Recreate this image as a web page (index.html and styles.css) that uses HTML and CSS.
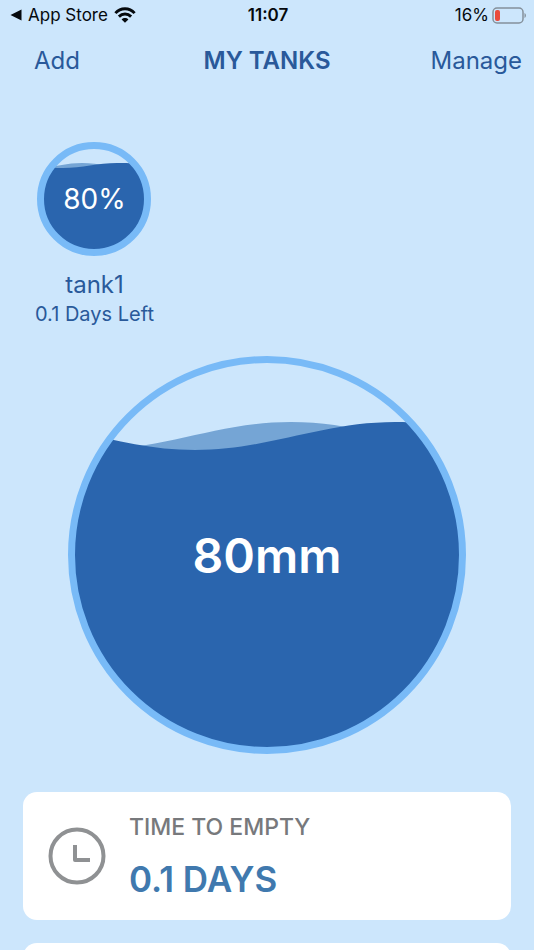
FILE: index.html
```html
<!DOCTYPE html>
<html lang="en">
<head>
<meta charset="utf-8">
<meta name="viewport" content="width=device-width, initial-scale=1">
<title>My Tanks</title>
<link rel="stylesheet" href="styles.css">
</head>
<body>
<div class="app">
  <div class="status">
    <a class="status-back" href="#">
      <svg width="12" height="12" viewBox="0 0 12 12" aria-hidden="true"><path d="M0.500 6 11.500 0.500V11.500Z"/></svg>
      <span>App Store</span>
      <svg width="22" height="16" viewBox="0 0 22 16" aria-hidden="true">
        <g fill="none" stroke="#05090d" stroke-width="2.900"><path d="M1.400 6.100C6.600.300 15.400.300 20.600 6.100"/><path d="M4.900 9.600C8.400 6.100 13.600 6.100 17.100 9.600"/></g>
        <path d="M7.600 12.400C9.500 10.600 12.500 10.600 14.400 12.400L11 15.800Z"/>
      </svg>
    </a>
    <span class="status-time">11:07</span>
    <span class="status-power">
      <span>16%</span>
      <svg width="34" height="17" viewBox="0 0 34 17" aria-hidden="true">
        <rect x="1" y="1" width="30" height="15" rx="4" fill="none" stroke="#84909a" stroke-width="1.500"/>
        <rect x="3" y="3" width="5" height="11" rx="2" fill="#ea4a3c"/>
        <path d="M32.500 6C34.400 6.700 34.400 10.300 32.500 11Z" fill="#84909a"/>
      </svg>
    </span>
  </div>

  <header class="bar">
    <button class="bar-button bar-button-start" type="button">Add</button>
    <h1 class="bar-title">MY TANKS</h1>
    <button class="bar-button bar-button-end" type="button">Manage</button>
  </header>

  <main class="content">
    <section class="tanks">
      <a class="tank" href="#">
        <span class="gauge gauge-small">
          <svg class="gauge-art" viewBox="0 0 114 114" aria-hidden="true">
            <defs><clipPath id="small-inside"><circle cx="57" cy="57" r="51"/></clipPath></defs>
            <g clip-path="url(#small-inside)">
              <path class="wave-back" d="M-2 26C16 26 27 21 45 21S74 26 92 26H114V114H-2Z"/>
              <path class="wave-front" d="M-26 21C-7 21 7 26 26 26S61 21 80 21 104 22 118 26V114H-26Z"/>
            </g>
            <circle class="ring" cx="57" cy="57" r="53.500"/>
          </svg>
          <span class="gauge-value">80%</span>
        </span>
        <span class="tank-name">tank1</span>
        <span class="tank-left">0.1 Days Left</span>
      </a>
    </section>

    <section class="level">
      <div class="gauge gauge-large">
        <svg class="gauge-art" viewBox="0 0 398 398" aria-hidden="true">
          <defs><clipPath id="large-inside"><circle cx="199" cy="199" r="193"/></clipPath></defs>
          <g clip-path="url(#large-inside)">
            <path class="wave-back" d="M23 94C96 94 150 66 223 66S350 94 423 94V398H23Z"/>
            <path class="wave-front" d="M-73 66C0 66 54 94 127 94S254 66 327 66 454 94 527 94V398H-73Z"/>
          </g>
          <circle class="ring" cx="199" cy="199" r="195.500"/>
        </svg>
        <span class="gauge-value">80mm</span>
      </div>
    </section>

    <section class="cards">
      <article class="card">
        <svg class="card-icon" viewBox="0 0 58 58" aria-hidden="true">
          <g fill="none" stroke="#8f9193" stroke-width="4"><circle cx="29" cy="29" r="26.500"/><path d="M27 18V33H42" stroke-linejoin="round"/></g>
        </svg>
        <div class="card-text">
          <h2 class="card-label">TIME TO EMPTY</h2>
          <p class="card-value">0.1 DAYS</p>
        </div>
      </article>
      <article class="card"></article>
    </section>
  </main>
</div>
</body>
</html>
```
FILE: styles.css
```css
* {
  box-sizing: border-box;
}

body {
  margin: 0;
  background: #cce6fc;
  color: #29599a;
  font-family: Inter, "Liberation Sans", sans-serif;
}

h1, h2, p {
  margin: 0;
}

a {
  color: inherit;
  text-decoration: none;
}

svg {
  display: block;
  flex: none;
}

.app {
  height: 100vh;
  overflow: hidden;
}

.status,
.bar {
  display: grid;
  grid-template-columns: 1fr auto 1fr;
  align-items: center;
}

.status {
  height: 30px;
  padding: 0 8px 0 10px;
  color: #05090d;
  fill: #05090d;
  font-size: 17px;
}

.status-back,
.status-power {
  display: flex;
  align-items: center;
  gap: 6px;
}

.status-power {
  justify-content: flex-end;
  gap: 3px;
}

.status-time {
  font-weight: 600;
}

.bar {
  height: 60px;
  padding: 0 12px;
}

.bar-button {
  padding: 0;
  border: 0;
  background: none;
  color: inherit;
  font: inherit;
  font-size: 24px;
  cursor: pointer;
}

.bar-button-start {
  justify-self: start;
  margin-left: 22px;
}

.bar-button-end {
  justify-self: end;
}

.bar-title {
  font-size: 24px;
  font-weight: 600;
}

.content {
  padding: 52px 23px 0;
}

.tanks {
  display: flex;
}

.tank {
  display: flex;
  flex-direction: column;
  align-items: center;
  padding: 0 12px;
}

.tank-name {
  margin-top: 14px;
  font-size: 24px;
  line-height: 30px;
}

.tank-left {
  font-size: 20px;
  line-height: 28px;
}

.gauge {
  display: grid;
  place-items: center;
  color: #fff;
}

.gauge-art,
.gauge-value {
  grid-area: 1 / 1;
}

.gauge-art {
  width: 100%;
}

.gauge-small {
  width: 114px;
  font-size: 28px;
}

.gauge-large {
  width: 82%;
  max-width: 398px;
  margin: 28px auto 38px;
  font-size: 48px;
  font-weight: 600;
}

.ring {
  fill: none;
  stroke: #78baf7;
  stroke-width: 7;
}

.wave-back {
  fill: #75a5d5;
}

.wave-front {
  fill: #2a65ae;
}

.cards {
  display: grid;
  gap: 23px;
}

.card {
  display: flex;
  align-items: center;
  gap: 23px;
  min-height: 128px;
  padding: 12px 25px;
  border-radius: 14px;
  background: #fff;
}

.card-icon {
  width: 58px;
}

.card-label {
  color: #77797c;
  font-size: 23px;
  font-weight: 500;
  line-height: 46px;
}

.card-value {
  color: #4079ae;
  font-size: 35px;
  font-weight: 600;
  line-height: 58px;
}
```
